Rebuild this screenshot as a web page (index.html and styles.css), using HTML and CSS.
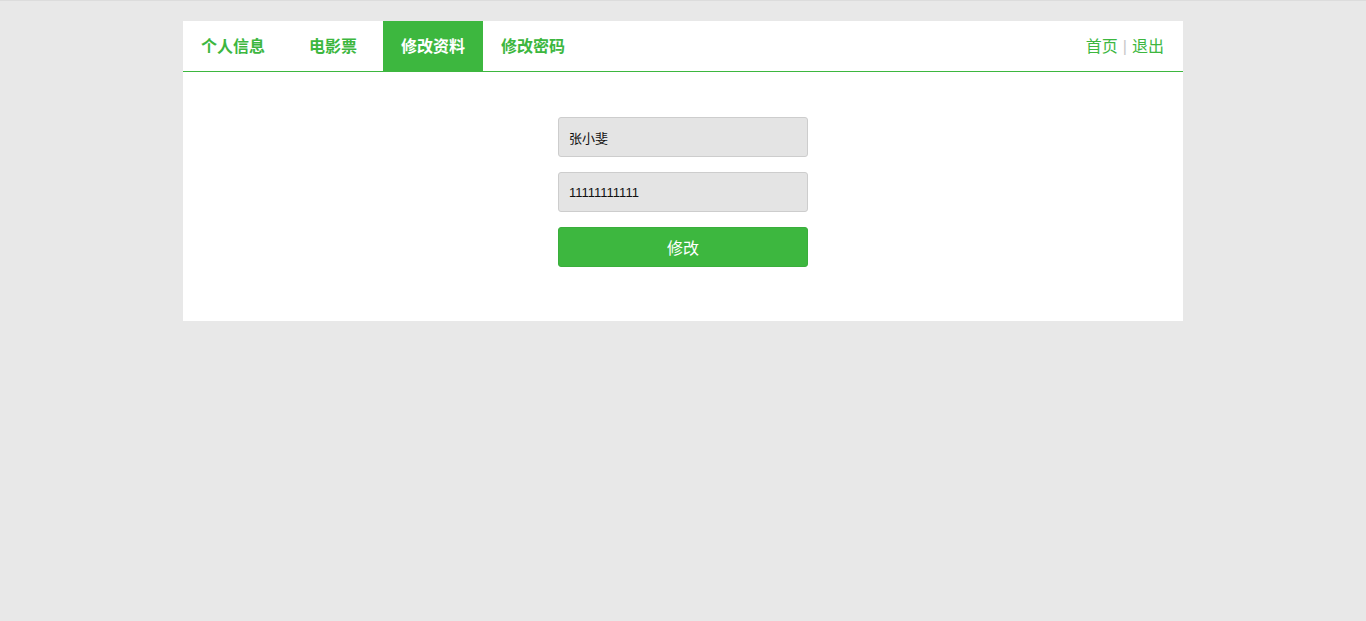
FILE: index.html
```html
<!DOCTYPE html>
<html lang="zh-CN">
<head>
    <meta charset="UTF-8">
    <meta name="viewport" content="width=device-width, initial-scale=1.0">
    <title>修改资料</title>
    <link rel="stylesheet" href="styles.css">
</head>
<body>
    <div class="user-box">
        <div class="user-nav">
            <ul class="tabs">
                <li><a href="#">个人信息</a></li>
                <li><a href="#">电影票</a></li>
                <li class="active"><a href="#">修改资料</a></li>
                <li><a href="#">修改密码</a></li>
            </ul>
            <div class="links">
                <a href="#">首页</a><span class="sep">|</span><a href="#">退出</a>
            </div>
        </div>

        <form class="edit-form">
            <input type="text" class="field" value="张小斐">
            <input type="text" class="field" value="11111111111">
            <button type="button" class="submit-btn">修改</button>
        </form>
    </div>
</body>
</html>
```

FILE: styles.css
```css
body {
    margin: 0;
    padding-top: 21px;
    background-color: #e8e8e8;
    border-top: 1px solid #dcdcdc;
    font-family: 'Liberation Sans', 'Noto Sans CJK SC', sans-serif;
}

.user-box {
    width: 1000px;
    height: 300px;
    margin: -1px auto 0;
    background-color: #fff;
}

.user-nav {
    display: flex;
    justify-content: space-between;
    height: 50px;
    border-bottom: 1px solid #3db73f;
}

.tabs {
    display: flex;
    margin: 0;
    padding: 0;
    list-style: none;
}

.tabs li a {
    display: block;
    width: 100px;
    height: 50px;
    box-sizing: border-box;
    padding-top: 2px;
    line-height: 48px;
    text-align: center;
    font-size: 16px;
    font-weight: bold;
    color: #3db73f;
    text-decoration: none;
}

.tabs li.active a {
    background-color: #3db73f;
    color: #fff;
}

.links {
    padding: 2px 19px 0 0;
    line-height: 48px;
    font-size: 16px;
}

.links a {
    color: #3db73f;
    text-decoration: none;
}

.sep {
    margin: 0 5px;
    color: #c8c8c8;
}

.edit-form {
    display: flex;
    flex-direction: column;
    align-items: center;
    gap: 15px;
    padding-top: 45px;
}

.field {
    box-sizing: border-box;
    width: 250px;
    height: 40px;
    padding: 0 10px;
    margin: 0;
    background-color: #e4e4e4;
    border: 1px solid #cdcdcd;
    border-radius: 3px;
    font-family: 'Liberation Sans', 'Noto Sans CJK SC', sans-serif;
    font-size: 13px;
    color: #111;
}

.submit-btn {
    box-sizing: border-box;
    width: 250px;
    height: 40px;
    margin: 0;
    background-color: #3db73f;
    border: 1px solid #3aae3c;
    border-radius: 3px;
    color: #fff;
    font-family: 'Liberation Sans', 'Noto Sans CJK SC', sans-serif;
    font-size: 16px;
    cursor: pointer;
}
```
